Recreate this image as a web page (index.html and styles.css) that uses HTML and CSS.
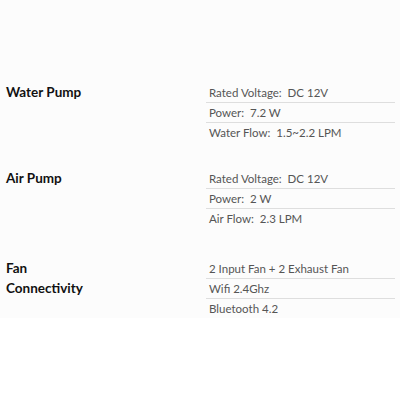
FILE: index.html
```html
<!DOCTYPE html>
<html>
<head>
<meta charset="utf-8">
<link rel="stylesheet" href="styles.css">
</head>
<body>
<main class="specs">
  <section class="group group-water">
    <div class="row"><div class="label">Water Pump</div><div class="value">Rated Voltage:&nbsp; DC 12V</div></div>
    <div class="row"><div class="label"></div><div class="value">Power:&nbsp; 7.2 W</div></div>
    <div class="row"><div class="label"></div><div class="value">Water Flow:&nbsp; 1.5~2.2 LPM</div></div>
  </section>
  <section class="group group-air">
    <div class="row"><div class="label">Air Pump</div><div class="value">Rated Voltage:&nbsp; DC 12V</div></div>
    <div class="row"><div class="label"></div><div class="value">Power:&nbsp; 2 W</div></div>
    <div class="row"><div class="label"></div><div class="value">Air Flow:&nbsp; 2.3 LPM</div></div>
  </section>
  <section class="group group-misc">
    <div class="row"><div class="label">Fan</div><div class="value">2 Input Fan + 2 Exhaust Fan</div></div>
    <div class="row"><div class="label">Connectivity</div><div class="value">Wifi 2.4Ghz</div></div>
    <div class="row"><div class="label"></div><div class="value">Bluetooth 4.2</div></div>
  </section>
</main>
</body>
</html>
```
FILE: styles.css
```css
html, body {
  margin: 0;
  padding: 0;
  background: #ffffff;
}
body {
  font-family: "Lato", "Noto Sans", sans-serif;
}
.specs {
  background: #fcfcfc;
  padding-top: 83px;
  display: flex;
  flex-direction: column;
}
.group-air { margin-top: 27px; }
.group-misc { margin-top: 31px; }
.row {
  display: grid;
  grid-template-columns: 206px 1fr;
}
.label {
  padding-left: 6px;
  font-size: 13.5px;
  font-weight: 700;
  color: #111;
  line-height: 19px;
  height: 19px;
}
.row + .row .label {
  padding-top: 1px;
}
.value {
  margin-right: 5px;
  padding-left: 3px;
  font-size: 11.5px;
  color: #555;
  line-height: 19px;
  height: 19px;
}
.row + .row .value {
  border-top: 1px solid #dedede;
}
```
